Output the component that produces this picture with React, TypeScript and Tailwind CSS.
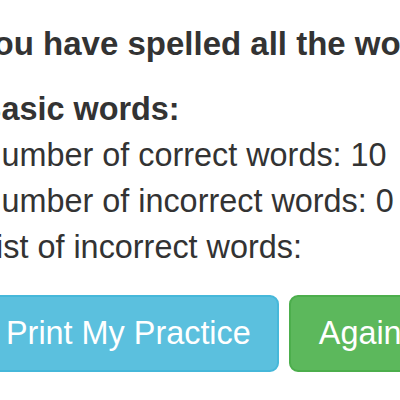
import React from 'react'

const stats = [
  { label: 'Number of correct words', value: '10' },
  { label: 'Number of incorrect words', value: '0' },
]

export default function App() {
  return (
    <div className="h-[400px] w-[400px] overflow-hidden bg-white font-['Liberation_Sans',Arial,sans-serif] text-[32.4px] leading-[45.7px] text-[#333]">
      <div className="ml-[-22px] w-[700px] pt-[21px]">
        <p className="mb-[20px] ml-[-4px] whitespace-nowrap text-[33px] font-bold">
          You have spelled all the words correctly!
        </p>
        <p className="mb-[1px] whitespace-nowrap font-bold">Basic words:</p>
        {stats.map((s) => (
          <p key={s.label} className="whitespace-nowrap">
            {s.label}: {s.value}
          </p>
        ))}
        <p className="whitespace-nowrap">List of incorrect words:</p>
        <ul className="mb-[24.5px]"></ul>
        <div className="flex gap-[10px]">
          <button className="rounded-[9px] border-2 border-[#46b8da] bg-[#5bc0de] px-[26px] py-[13.5px] leading-[45.7px] whitespace-nowrap text-white">
            Print My Practice
          </button>
          <button className="rounded-[9px] border-2 border-[#4cae4c] bg-[#5cb85c] px-[28px] py-[13.5px] leading-[45.7px] whitespace-nowrap text-white">
            Again
          </button>
        </div>
      </div>
    </div>
  )
}
